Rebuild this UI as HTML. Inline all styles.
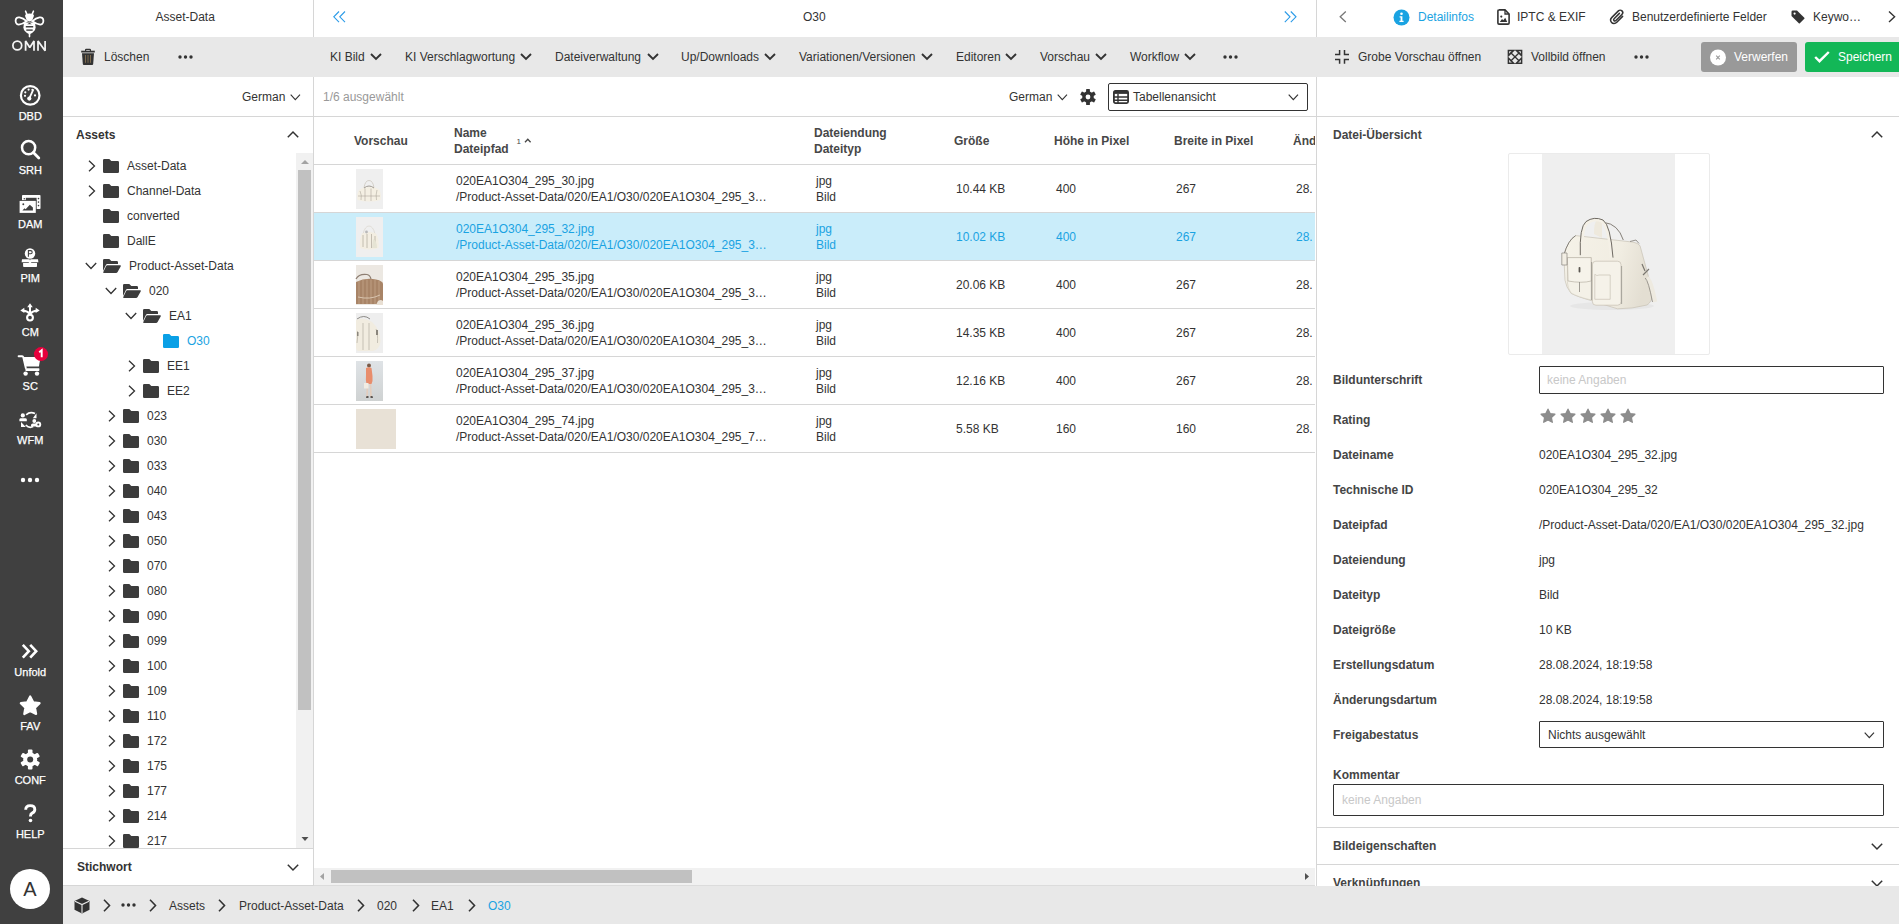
<!DOCTYPE html>
<html><head><meta charset="utf-8">
<style>
*{box-sizing:border-box;margin:0;padding:0}
html,body{width:1899px;height:924px;overflow:hidden;background:#fff;font-family:"Liberation Sans",sans-serif;font-size:12px;color:#333}
.abs{position:absolute}
.t{position:absolute;white-space:nowrap;line-height:14px}
#side{position:absolute;left:0;top:0;width:63px;height:924px;background:#404040}
.gray{background:#e8e8e8}
.b{font-weight:bold}
svg{position:absolute;overflow:visible}
.blue{color:#1aa3e2}
.sl{position:absolute;left:0;width:60.5px;text-align:center;white-space:nowrap;line-height:14px;font-size:11px;color:#fff;-webkit-text-stroke:0.25px #fff}
</style></head><body>
<div class="abs" style="left:313px;top:0;width:1px;height:886px;background:#d6d6d6"></div>
<div class="abs" style="left:1316px;top:0;width:1px;height:886px;background:#d6d6d6"></div>
<div class="abs gray" style="left:63px;top:37px;width:1836px;height:40px"></div>
<div class="abs" style="left:63px;top:116px;width:1836px;height:1px;background:#d6d6d6"></div>
<div id="side">
<svg style="left:0;top:0" width="63" height="60" viewBox="0 0 63 60">
 <path d="M25.6 11.2 L27 14.6 M33.4 11.2 L32 14.6" stroke="#fff" stroke-width="1.6" stroke-linecap="round"/>
 <path d="M25 15.8 Q25.3 13.6 29.5 13.6 Q33.7 13.6 34 15.8 L32.3 20.2 Q29.5 22.6 26.7 20.2Z" fill="#fff"/>
 <path d="M26.6 21.2 C22.5 24 16 27.2 15.6 21 C15.4 15 22.5 17.4 26.6 21.2Z" fill="none" stroke="#fff" stroke-width="1.8"/>
 <path d="M32.4 21.2 C36.5 24 43 27.2 43.4 21 C43.6 15 36.5 17.4 32.4 21.2Z" fill="none" stroke="#fff" stroke-width="1.8"/>
 <path d="M24 22.5 H35 L35.6 27.5 Q35.3 31.8 29.5 34.2 Q23.7 31.8 23.4 27.5Z" fill="#fff"/>
 <path d="M27.2 24.2 L29.5 22.8 L31.8 24.2Z" fill="#404040"/>
 <rect x="25.8" y="26" width="7.4" height="1.5" fill="#404040"/>
 <rect x="26.3" y="29.4" width="6.4" height="1.4" fill="#404040"/>
 <path d="M29.5 33.5 V36.6" stroke="#fff" stroke-width="1.6" stroke-linecap="round"/>
 <g fill="none" stroke="#f4f4f4" stroke-width="1.75" stroke-linejoin="bevel">
  <circle cx="17.3" cy="45.6" r="4.4"/>
  <path d="M25.6 50.8 V41 L29.8 47.4 L34 41 V50.8"/>
  <path d="M38 50.8 V41 L45.1 50.8 V41"/>
 </g>
</svg>
<svg style="left:0;top:80px" width="63" height="30" viewBox="0 80 63 30">
 <circle cx="30.2" cy="95.4" r="9.3" fill="none" stroke="#fff" stroke-width="2.2"/>
 <circle cx="25.3" cy="92.3" r="1.1" fill="#fff"/><circle cx="28.6" cy="89.6" r="1.1" fill="#fff"/><circle cx="35" cy="95.4" r="1.1" fill="#fff"/><circle cx="25" cy="95.8" r="1.1" fill="#fff"/><circle cx="32.4" cy="89.8" r="1.1" fill="#fff"/>
 <path d="M29.2 98.6 L33.4 89.4" stroke="#fff" stroke-width="1.8"/>
 <circle cx="29.3" cy="98.6" r="2.1" fill="#fff"/>
</svg>
<svg style="left:0;top:135px" width="63" height="30" viewBox="0 135 63 30">
 <circle cx="28.6" cy="147.6" r="6.6" fill="none" stroke="#fff" stroke-width="2.5"/>
 <path d="M33.4 152.6 L38.8 158" stroke="#fff" stroke-width="2.8" stroke-linecap="round"/>
</svg>
<svg style="left:0;top:190px" width="63" height="30" viewBox="0 190 63 30">
 <rect x="22" y="195" width="18.5" height="14" rx="0.8" fill="#fff"/>
 <rect x="25.8" y="197.8" width="10.8" height="3" fill="#404040"/>
 <circle cx="24.3" cy="198.7" r="0.8" fill="#404040"/><circle cx="38.5" cy="198.6" r="0.8" fill="#404040"/><circle cx="38.5" cy="202.1" r="0.8" fill="#404040"/><circle cx="38.5" cy="205.6" r="0.8" fill="#404040"/>
 <rect x="18.8" y="200.1" width="17.9" height="13.6" fill="#404040"/>
 <rect x="19.6" y="200.9" width="16.2" height="12" fill="#fff"/>
 <path d="M22.4 210.6 L24.5 208.2 L25.6 209.2 L29.8 204.8 L32.9 207.6 V210.6Z" fill="#404040"/>
 <circle cx="23.3" cy="204.2" r="0.95" fill="#404040"/>
</svg>
<svg style="left:0;top:244px" width="63" height="30" viewBox="0 244 63 30">
 <circle cx="30" cy="253.5" r="5.2" fill="#fff"/>
 <path d="M28.4 256.8 V250.6 H30.6 Q32.2 250.6 32.2 252.2 Q32.2 253.8 30.6 253.8 H28.4" fill="none" stroke="#404040" stroke-width="1.1"/>
 <path d="M22 259.2 H29.5 L30 260.5 L30.5 259.2 H38 L38.4 262.2 H21.6Z" fill="#fff"/>
 <path d="M23.1 262.9 H28.4 L30 261.2 L31.6 262.9 H37 V266.2 Q37 267 36.2 267 H23.9 Q23.1 267 23.1 266.2Z" fill="#fff"/>
</svg>
<svg style="left:0;top:298px" width="63" height="30" viewBox="0 298 63 30">
 <path d="M30 306 V313.5 M23 310.6 Q27.5 311 30 314 Q32.5 311 37 310.6" stroke="#fff" stroke-width="2" fill="none"/>
 <path d="M27.2 307.2 L30 303.2 L32.8 307.2Z M20.3 310.5 L24.3 307.8 L24.4 313Z M39.7 310.5 L35.7 307.8 L35.6 313Z" fill="#fff"/>
 <circle cx="30" cy="317.6" r="2.9" fill="#404040" stroke="#fff" stroke-width="2.1"/>
</svg>
<svg style="left:0;top:340px" width="63" height="40" viewBox="0 340 63 40">
 <path d="M18.6 356.3 H22.2 Q23 356.3 23.3 357.2 L25.8 368" stroke="#fff" stroke-width="1.9" fill="none" stroke-linecap="round"/>
 <path d="M23 357 H40.6 L38.9 366.6 H25.2Z" fill="#fff"/>
 <rect x="25.4" y="368.2" width="14" height="2.7" rx="0.6" fill="#fff"/>
 <circle cx="25.6" cy="373.6" r="2.2" fill="#fff"/><circle cx="37" cy="373.6" r="2.2" fill="#fff"/>
 <circle cx="41" cy="354.1" r="7" fill="#e6003c"/>
 <path d="M39.2 352.2 L41.7 350.2 V357.2" stroke="#fff" stroke-width="1.9" fill="none"/>
</svg>
<svg style="left:0;top:405px" width="63" height="30" viewBox="0 405 63 30">
 <circle cx="22.8" cy="415.4" r="2.1" fill="#fff"/>
 <path d="M19.4 421.2 V419.6 Q19.4 418.2 21 418.2 H25.2 Q26.8 418.2 26.8 419.6 V421.2Z" fill="#fff"/>
 <path d="M26.2 414.8 Q30 411.2 35 413.6" stroke="#fff" stroke-width="1.7" fill="none"/>
 <path d="M32.8 418.2 L36.5 418.2 L36.5 413.2Z" fill="#fff"/>
 <path d="M33.2 426.6 Q29 428.6 25.8 425" stroke="#fff" stroke-width="1.7" fill="none"/>
 <path d="M21 422 L21 427 L25.8 427Z" fill="#fff"/>
 <circle cx="34.3" cy="421" r="1.9" fill="#fff"/>
 <path d="M31 426.6 V425.2 Q31 423.5 32.8 423.5 H35.8 Q37 423.5 37 425 V426.6Z" fill="#fff"/>
 <circle cx="38.3" cy="424.4" r="2.9" fill="#fff"/><circle cx="38.3" cy="424.4" r="1" fill="#404040"/>
</svg>
<svg style="left:0;top:470px" width="63" height="20" viewBox="0 470 63 20">
 <circle cx="23" cy="480" r="2.2" fill="#fff"/><circle cx="30" cy="480" r="2.2" fill="#fff"/><circle cx="37" cy="480" r="2.2" fill="#fff"/>
</svg>
<svg style="left:0;top:640px" width="63" height="24" viewBox="0 640 63 24">
 <path d="M22.8 644.8 L28.8 651.2 L22.8 657.6 M30.2 644.8 L36.2 651.2 L30.2 657.6" stroke="#fff" stroke-width="2.6" fill="none"/>
</svg>
<svg style="left:0;top:692px" width="63" height="26" viewBox="0 692 63 26">
 <path d="M30.2 696.5 L33.2 702.3 L39.6 703.2 L35 707.6 L36.1 714 L30.2 711 L24.3 714 L25.4 707.6 L20.8 703.2 L27.2 702.3Z" fill="#fff" stroke="#fff" stroke-width="2.2" stroke-linejoin="round"/>
</svg>
<svg style="left:0;top:746px" width="63" height="26" viewBox="0 746 63 26">
 <g transform="translate(30.2 759.6)" fill="#fff">
  <circle r="7"/>
  <rect x="-2.3" y="-10" width="4.6" height="5" rx="1" transform="rotate(0)"/><rect x="-2.3" y="-10" width="4.6" height="5" rx="1" transform="rotate(60)"/><rect x="-2.3" y="-10" width="4.6" height="5" rx="1" transform="rotate(120)"/><rect x="-2.3" y="-10" width="4.6" height="5" rx="1" transform="rotate(180)"/><rect x="-2.3" y="-10" width="4.6" height="5" rx="1" transform="rotate(240)"/><rect x="-2.3" y="-10" width="4.6" height="5" rx="1" transform="rotate(300)"/>
  <circle r="3" fill="#404040"/>
 </g>
</svg>
<svg style="left:0;top:800px" width="63" height="30" viewBox="0 800 63 30">
 <path d="M25.7 809.8 Q25.7 805.6 30.2 805.6 Q34.8 805.6 34.8 809.4 Q34.8 811.7 32.5 812.9 Q30.5 814 30.5 816 V816.6" stroke="#fff" stroke-width="2.9" fill="none"/>
 <circle cx="30.5" cy="820.5" r="1.8" fill="#fff"/>
</svg>
<div class="sl" style="top:109px">DBD</div>
<div class="sl" style="top:163px">SRH</div>
<div class="sl" style="top:217px">DAM</div>
<div class="sl" style="top:271px">PIM</div>
<div class="sl" style="top:325px">CM</div>
<div class="sl" style="top:379px">SC</div>
<div class="sl" style="top:433px">WFM</div>
<div class="sl" style="top:665px">Unfold</div>
<div class="sl" style="top:719px">FAV</div>
<div class="sl" style="top:773px">CONF</div>
<div class="sl" style="top:827px">HELP</div>
<div class="abs" style="left:10px;top:869px;width:40px;height:40px;border-radius:50%;background:#fff;color:#333;font-size:20px;line-height:40px;text-align:center">A</div>
</div>
<!-- LEFT PANEL -->
<div class="t" style="left:155.5px;top:10px">Asset-Data</div>
<svg style="left:81px;top:49px" width="14" height="16" viewBox="0 0 14 16">
 <path d="M0.2 2.6 H13.8" stroke="#333" stroke-width="1.8"/>
 <path d="M4.6 2.2 V0.8 Q4.6 0.3 5.1 0.3 H8.9 Q9.4 0.3 9.4 0.8 V2.2" stroke="#333" stroke-width="1.2" fill="none"/>
 <path d="M1 4.2 H13 L12.2 15 Q12.1 15.9 11.2 15.9 H2.8 Q1.9 15.9 1.8 15 Z" fill="#333"/>
 <path d="M4.5 6 V13.8 M7 6 V13.8 M9.5 6 V13.8" stroke="#c9a46b" stroke-width="0.9" opacity="0.55"/>
</svg>
<div class="t" style="left:104px;top:50px">Löschen</div>
<svg style="left:178px;top:54px" width="16" height="6"><circle cx="2" cy="3" r="1.7" fill="#333"/><circle cx="7.5" cy="3" r="1.7" fill="#333"/><circle cx="13" cy="3" r="1.7" fill="#333"/></svg>
<div class="t" style="left:242px;top:90px">German</div>
<svg style="left:290px;top:94px" width="11" height="7"><path d="M0.7 0.7 L5.3 5.6 L10 0.7" stroke="#333" stroke-width="1.1" fill="none"/></svg>
<div class="t b" style="left:76px;top:128px">Assets</div>
<svg style="left:287px;top:131px" width="12" height="7"><path d="M0.8 6.2 L6 1 L11.2 6.2" stroke="#333" stroke-width="1.5" fill="none"/></svg>
<!-- left scrollbar -->
<div class="abs" style="left:296px;top:153px;width:17px;height:695px;background:#f1f1f1"></div>
<div class="abs" style="left:298px;top:170px;width:13px;height:540px;background:#c1c1c1"></div>
<svg style="left:297px;top:153px" width="16" height="16"><path d="M4 11 L8 7 L12 11Z" fill="#a3a3a3"/></svg>
<svg style="left:297px;top:832px" width="16" height="16"><path d="M4.5 5 L11.5 5 L8 9Z" fill="#505050"/></svg>
<div class="abs" style="left:63px;top:848px;width:250px;height:1px;background:#d6d6d6"></div>
<div class="t b" style="left:77px;top:860px">Stichwort</div>
<svg style="left:287px;top:864px" width="12" height="7"><path d="M0.8 0.8 L6 6 L11.2 0.8" stroke="#333" stroke-width="1.5" fill="none"/></svg>
<div class="abs" style="left:63px;top:885px;width:250px;height:1px;background:#d6d6d6"></div>
<div class="abs" style="left:63px;top:153px;width:234px;height:695px;overflow:hidden">
<svg style="left:25px;top:6.5px" width="8" height="12"><path d="M1 0.8 L6.5 6 L1 11.2" stroke="#333" stroke-width="1.3" fill="none"/></svg>
<svg style="left:40px;top:6.0px" width="16" height="14"><path d="M0 1.3 Q0 0 1.3 0 H6.3 L8.3 2 H14.7 Q16 2 16 3.3 V12.7 Q16 14 14.7 14 H1.3 Q0 14 0 12.7Z" fill="#3c3c3c"/></svg>
<div class="t" style="left:64px;top:5.5px">Asset-Data</div>
<svg style="left:25px;top:31.5px" width="8" height="12"><path d="M1 0.8 L6.5 6 L1 11.2" stroke="#333" stroke-width="1.3" fill="none"/></svg>
<svg style="left:40px;top:31.0px" width="16" height="14"><path d="M0 1.3 Q0 0 1.3 0 H6.3 L8.3 2 H14.7 Q16 2 16 3.3 V12.7 Q16 14 14.7 14 H1.3 Q0 14 0 12.7Z" fill="#3c3c3c"/></svg>
<div class="t" style="left:64px;top:30.5px">Channel-Data</div>
<svg style="left:40px;top:56.0px" width="16" height="14"><path d="M0 1.3 Q0 0 1.3 0 H6.3 L8.3 2 H14.7 Q16 2 16 3.3 V12.7 Q16 14 14.7 14 H1.3 Q0 14 0 12.7Z" fill="#3c3c3c"/></svg>
<div class="t" style="left:64px;top:55.5px">converted</div>
<svg style="left:40px;top:81.0px" width="16" height="14"><path d="M0 1.3 Q0 0 1.3 0 H6.3 L8.3 2 H14.7 Q16 2 16 3.3 V12.7 Q16 14 14.7 14 H1.3 Q0 14 0 12.7Z" fill="#3c3c3c"/></svg>
<div class="t" style="left:64px;top:80.5px">DallE</div>
<svg style="left:22px;top:109.0px" width="12" height="8"><path d="M0.8 1 L6 6.5 L11.2 1" stroke="#333" stroke-width="1.3" fill="none"/></svg>
<svg style="left:40px;top:106.0px" width="18" height="14"><path d="M0 12 V1.3 Q0 0 1.3 0 H6.3 L8.3 2 H13.7 Q15 2 15 3.3 V5 H4.3 Q3.4 5 2.9 6Z" fill="#3c3c3c"/><path d="M4.2 6.2 H17 Q18.3 6.2 17.8 7.3 L14.6 13 Q14.1 14 13 14 H0.9 Q-0.2 14 0.3 13 L3 7.2 Q3.5 6.2 4.2 6.2Z" fill="#3c3c3c"/></svg>
<div class="t" style="left:66px;top:105.5px">Product-Asset-Data</div>
<svg style="left:42px;top:134.0px" width="12" height="8"><path d="M0.8 1 L6 6.5 L11.2 1" stroke="#333" stroke-width="1.3" fill="none"/></svg>
<svg style="left:60px;top:131.0px" width="18" height="14"><path d="M0 12 V1.3 Q0 0 1.3 0 H6.3 L8.3 2 H13.7 Q15 2 15 3.3 V5 H4.3 Q3.4 5 2.9 6Z" fill="#3c3c3c"/><path d="M4.2 6.2 H17 Q18.3 6.2 17.8 7.3 L14.6 13 Q14.1 14 13 14 H0.9 Q-0.2 14 0.3 13 L3 7.2 Q3.5 6.2 4.2 6.2Z" fill="#3c3c3c"/></svg>
<div class="t" style="left:86px;top:130.5px">020</div>
<svg style="left:62px;top:159.0px" width="12" height="8"><path d="M0.8 1 L6 6.5 L11.2 1" stroke="#333" stroke-width="1.3" fill="none"/></svg>
<svg style="left:80px;top:156.0px" width="18" height="14"><path d="M0 12 V1.3 Q0 0 1.3 0 H6.3 L8.3 2 H13.7 Q15 2 15 3.3 V5 H4.3 Q3.4 5 2.9 6Z" fill="#3c3c3c"/><path d="M4.2 6.2 H17 Q18.3 6.2 17.8 7.3 L14.6 13 Q14.1 14 13 14 H0.9 Q-0.2 14 0.3 13 L3 7.2 Q3.5 6.2 4.2 6.2Z" fill="#3c3c3c"/></svg>
<div class="t" style="left:106px;top:155.5px">EA1</div>
<svg style="left:100px;top:181.0px" width="16" height="14"><path d="M0 1.3 Q0 0 1.3 0 H6.3 L8.3 2 H14.7 Q16 2 16 3.3 V12.7 Q16 14 14.7 14 H1.3 Q0 14 0 12.7Z" fill="#0aa0e6"/></svg>
<div class="t blue" style="left:124px;top:180.5px">O30</div>
<svg style="left:65px;top:206.5px" width="8" height="12"><path d="M1 0.8 L6.5 6 L1 11.2" stroke="#333" stroke-width="1.3" fill="none"/></svg>
<svg style="left:80px;top:206.0px" width="16" height="14"><path d="M0 1.3 Q0 0 1.3 0 H6.3 L8.3 2 H14.7 Q16 2 16 3.3 V12.7 Q16 14 14.7 14 H1.3 Q0 14 0 12.7Z" fill="#3c3c3c"/></svg>
<div class="t" style="left:104px;top:205.5px">EE1</div>
<svg style="left:65px;top:231.5px" width="8" height="12"><path d="M1 0.8 L6.5 6 L1 11.2" stroke="#333" stroke-width="1.3" fill="none"/></svg>
<svg style="left:80px;top:231.0px" width="16" height="14"><path d="M0 1.3 Q0 0 1.3 0 H6.3 L8.3 2 H14.7 Q16 2 16 3.3 V12.7 Q16 14 14.7 14 H1.3 Q0 14 0 12.7Z" fill="#3c3c3c"/></svg>
<div class="t" style="left:104px;top:230.5px">EE2</div>
<svg style="left:45px;top:256.5px" width="8" height="12"><path d="M1 0.8 L6.5 6 L1 11.2" stroke="#333" stroke-width="1.3" fill="none"/></svg>
<svg style="left:60px;top:256.0px" width="16" height="14"><path d="M0 1.3 Q0 0 1.3 0 H6.3 L8.3 2 H14.7 Q16 2 16 3.3 V12.7 Q16 14 14.7 14 H1.3 Q0 14 0 12.7Z" fill="#3c3c3c"/></svg>
<div class="t" style="left:84px;top:255.5px">023</div>
<svg style="left:45px;top:281.5px" width="8" height="12"><path d="M1 0.8 L6.5 6 L1 11.2" stroke="#333" stroke-width="1.3" fill="none"/></svg>
<svg style="left:60px;top:281.0px" width="16" height="14"><path d="M0 1.3 Q0 0 1.3 0 H6.3 L8.3 2 H14.7 Q16 2 16 3.3 V12.7 Q16 14 14.7 14 H1.3 Q0 14 0 12.7Z" fill="#3c3c3c"/></svg>
<div class="t" style="left:84px;top:280.5px">030</div>
<svg style="left:45px;top:306.5px" width="8" height="12"><path d="M1 0.8 L6.5 6 L1 11.2" stroke="#333" stroke-width="1.3" fill="none"/></svg>
<svg style="left:60px;top:306.0px" width="16" height="14"><path d="M0 1.3 Q0 0 1.3 0 H6.3 L8.3 2 H14.7 Q16 2 16 3.3 V12.7 Q16 14 14.7 14 H1.3 Q0 14 0 12.7Z" fill="#3c3c3c"/></svg>
<div class="t" style="left:84px;top:305.5px">033</div>
<svg style="left:45px;top:331.5px" width="8" height="12"><path d="M1 0.8 L6.5 6 L1 11.2" stroke="#333" stroke-width="1.3" fill="none"/></svg>
<svg style="left:60px;top:331.0px" width="16" height="14"><path d="M0 1.3 Q0 0 1.3 0 H6.3 L8.3 2 H14.7 Q16 2 16 3.3 V12.7 Q16 14 14.7 14 H1.3 Q0 14 0 12.7Z" fill="#3c3c3c"/></svg>
<div class="t" style="left:84px;top:330.5px">040</div>
<svg style="left:45px;top:356.5px" width="8" height="12"><path d="M1 0.8 L6.5 6 L1 11.2" stroke="#333" stroke-width="1.3" fill="none"/></svg>
<svg style="left:60px;top:356.0px" width="16" height="14"><path d="M0 1.3 Q0 0 1.3 0 H6.3 L8.3 2 H14.7 Q16 2 16 3.3 V12.7 Q16 14 14.7 14 H1.3 Q0 14 0 12.7Z" fill="#3c3c3c"/></svg>
<div class="t" style="left:84px;top:355.5px">043</div>
<svg style="left:45px;top:381.5px" width="8" height="12"><path d="M1 0.8 L6.5 6 L1 11.2" stroke="#333" stroke-width="1.3" fill="none"/></svg>
<svg style="left:60px;top:381.0px" width="16" height="14"><path d="M0 1.3 Q0 0 1.3 0 H6.3 L8.3 2 H14.7 Q16 2 16 3.3 V12.7 Q16 14 14.7 14 H1.3 Q0 14 0 12.7Z" fill="#3c3c3c"/></svg>
<div class="t" style="left:84px;top:380.5px">050</div>
<svg style="left:45px;top:406.5px" width="8" height="12"><path d="M1 0.8 L6.5 6 L1 11.2" stroke="#333" stroke-width="1.3" fill="none"/></svg>
<svg style="left:60px;top:406.0px" width="16" height="14"><path d="M0 1.3 Q0 0 1.3 0 H6.3 L8.3 2 H14.7 Q16 2 16 3.3 V12.7 Q16 14 14.7 14 H1.3 Q0 14 0 12.7Z" fill="#3c3c3c"/></svg>
<div class="t" style="left:84px;top:405.5px">070</div>
<svg style="left:45px;top:431.5px" width="8" height="12"><path d="M1 0.8 L6.5 6 L1 11.2" stroke="#333" stroke-width="1.3" fill="none"/></svg>
<svg style="left:60px;top:431.0px" width="16" height="14"><path d="M0 1.3 Q0 0 1.3 0 H6.3 L8.3 2 H14.7 Q16 2 16 3.3 V12.7 Q16 14 14.7 14 H1.3 Q0 14 0 12.7Z" fill="#3c3c3c"/></svg>
<div class="t" style="left:84px;top:430.5px">080</div>
<svg style="left:45px;top:456.5px" width="8" height="12"><path d="M1 0.8 L6.5 6 L1 11.2" stroke="#333" stroke-width="1.3" fill="none"/></svg>
<svg style="left:60px;top:456.0px" width="16" height="14"><path d="M0 1.3 Q0 0 1.3 0 H6.3 L8.3 2 H14.7 Q16 2 16 3.3 V12.7 Q16 14 14.7 14 H1.3 Q0 14 0 12.7Z" fill="#3c3c3c"/></svg>
<div class="t" style="left:84px;top:455.5px">090</div>
<svg style="left:45px;top:481.5px" width="8" height="12"><path d="M1 0.8 L6.5 6 L1 11.2" stroke="#333" stroke-width="1.3" fill="none"/></svg>
<svg style="left:60px;top:481.0px" width="16" height="14"><path d="M0 1.3 Q0 0 1.3 0 H6.3 L8.3 2 H14.7 Q16 2 16 3.3 V12.7 Q16 14 14.7 14 H1.3 Q0 14 0 12.7Z" fill="#3c3c3c"/></svg>
<div class="t" style="left:84px;top:480.5px">099</div>
<svg style="left:45px;top:506.5px" width="8" height="12"><path d="M1 0.8 L6.5 6 L1 11.2" stroke="#333" stroke-width="1.3" fill="none"/></svg>
<svg style="left:60px;top:506.0px" width="16" height="14"><path d="M0 1.3 Q0 0 1.3 0 H6.3 L8.3 2 H14.7 Q16 2 16 3.3 V12.7 Q16 14 14.7 14 H1.3 Q0 14 0 12.7Z" fill="#3c3c3c"/></svg>
<div class="t" style="left:84px;top:505.5px">100</div>
<svg style="left:45px;top:531.5px" width="8" height="12"><path d="M1 0.8 L6.5 6 L1 11.2" stroke="#333" stroke-width="1.3" fill="none"/></svg>
<svg style="left:60px;top:531.0px" width="16" height="14"><path d="M0 1.3 Q0 0 1.3 0 H6.3 L8.3 2 H14.7 Q16 2 16 3.3 V12.7 Q16 14 14.7 14 H1.3 Q0 14 0 12.7Z" fill="#3c3c3c"/></svg>
<div class="t" style="left:84px;top:530.5px">109</div>
<svg style="left:45px;top:556.5px" width="8" height="12"><path d="M1 0.8 L6.5 6 L1 11.2" stroke="#333" stroke-width="1.3" fill="none"/></svg>
<svg style="left:60px;top:556.0px" width="16" height="14"><path d="M0 1.3 Q0 0 1.3 0 H6.3 L8.3 2 H14.7 Q16 2 16 3.3 V12.7 Q16 14 14.7 14 H1.3 Q0 14 0 12.7Z" fill="#3c3c3c"/></svg>
<div class="t" style="left:84px;top:555.5px">110</div>
<svg style="left:45px;top:581.5px" width="8" height="12"><path d="M1 0.8 L6.5 6 L1 11.2" stroke="#333" stroke-width="1.3" fill="none"/></svg>
<svg style="left:60px;top:581.0px" width="16" height="14"><path d="M0 1.3 Q0 0 1.3 0 H6.3 L8.3 2 H14.7 Q16 2 16 3.3 V12.7 Q16 14 14.7 14 H1.3 Q0 14 0 12.7Z" fill="#3c3c3c"/></svg>
<div class="t" style="left:84px;top:580.5px">172</div>
<svg style="left:45px;top:606.5px" width="8" height="12"><path d="M1 0.8 L6.5 6 L1 11.2" stroke="#333" stroke-width="1.3" fill="none"/></svg>
<svg style="left:60px;top:606.0px" width="16" height="14"><path d="M0 1.3 Q0 0 1.3 0 H6.3 L8.3 2 H14.7 Q16 2 16 3.3 V12.7 Q16 14 14.7 14 H1.3 Q0 14 0 12.7Z" fill="#3c3c3c"/></svg>
<div class="t" style="left:84px;top:605.5px">175</div>
<svg style="left:45px;top:631.5px" width="8" height="12"><path d="M1 0.8 L6.5 6 L1 11.2" stroke="#333" stroke-width="1.3" fill="none"/></svg>
<svg style="left:60px;top:631.0px" width="16" height="14"><path d="M0 1.3 Q0 0 1.3 0 H6.3 L8.3 2 H14.7 Q16 2 16 3.3 V12.7 Q16 14 14.7 14 H1.3 Q0 14 0 12.7Z" fill="#3c3c3c"/></svg>
<div class="t" style="left:84px;top:630.5px">177</div>
<svg style="left:45px;top:656.5px" width="8" height="12"><path d="M1 0.8 L6.5 6 L1 11.2" stroke="#333" stroke-width="1.3" fill="none"/></svg>
<svg style="left:60px;top:656.0px" width="16" height="14"><path d="M0 1.3 Q0 0 1.3 0 H6.3 L8.3 2 H14.7 Q16 2 16 3.3 V12.7 Q16 14 14.7 14 H1.3 Q0 14 0 12.7Z" fill="#3c3c3c"/></svg>
<div class="t" style="left:84px;top:655.5px">214</div>
<svg style="left:45px;top:681.5px" width="8" height="12"><path d="M1 0.8 L6.5 6 L1 11.2" stroke="#333" stroke-width="1.3" fill="none"/></svg>
<svg style="left:60px;top:681.0px" width="16" height="14"><path d="M0 1.3 Q0 0 1.3 0 H6.3 L8.3 2 H14.7 Q16 2 16 3.3 V12.7 Q16 14 14.7 14 H1.3 Q0 14 0 12.7Z" fill="#3c3c3c"/></svg>
<div class="t" style="left:84px;top:680.5px">217</div>
</div>
<svg style="left:333px;top:11px" width="14" height="12"><path d="M6 0.5 L0.8 5.8 L6 11.1 M12 0.5 L6.8 5.8 L12 11.1" stroke="#2a9be8" stroke-width="1.1" fill="none"/></svg>
<div class="t" style="left:803px;top:10px">O30</div>
<svg style="left:1284px;top:11px" width="14" height="12"><path d="M0.8 0.5 L6 5.8 L0.8 11.1 M6.8 0.5 L12 5.8 L6.8 11.1" stroke="#2a9be8" stroke-width="1.1" fill="none"/></svg>
<div class="t" style="left:330px;top:50px">KI Bild</div>
<svg style="left:370px;top:53px" width="12" height="7"><path d="M1 1 L6 6 L11 1" stroke="#333" stroke-width="1.9" fill="none"/></svg>
<div class="t" style="left:405px;top:50px">KI Verschlagwortung</div>
<svg style="left:519.7px;top:53px" width="12" height="7"><path d="M1 1 L6 6 L11 1" stroke="#333" stroke-width="1.9" fill="none"/></svg>
<div class="t" style="left:555px;top:50px">Dateiverwaltung</div>
<svg style="left:646.5px;top:53px" width="12" height="7"><path d="M1 1 L6 6 L11 1" stroke="#333" stroke-width="1.9" fill="none"/></svg>
<div class="t" style="left:681px;top:50px">Up/Downloads</div>
<svg style="left:764.4px;top:53px" width="12" height="7"><path d="M1 1 L6 6 L11 1" stroke="#333" stroke-width="1.9" fill="none"/></svg>
<div class="t" style="left:799px;top:50px">Variationen/Versionen</div>
<svg style="left:920.7px;top:53px" width="12" height="7"><path d="M1 1 L6 6 L11 1" stroke="#333" stroke-width="1.9" fill="none"/></svg>
<div class="t" style="left:956px;top:50px">Editoren</div>
<svg style="left:1005.4px;top:53px" width="12" height="7"><path d="M1 1 L6 6 L11 1" stroke="#333" stroke-width="1.9" fill="none"/></svg>
<div class="t" style="left:1040px;top:50px">Vorschau</div>
<svg style="left:1095.4px;top:53px" width="12" height="7"><path d="M1 1 L6 6 L11 1" stroke="#333" stroke-width="1.9" fill="none"/></svg>
<div class="t" style="left:1130px;top:50px">Workflow</div>
<svg style="left:1184.4px;top:53px" width="12" height="7"><path d="M1 1 L6 6 L11 1" stroke="#333" stroke-width="1.9" fill="none"/></svg>
<svg style="left:1223px;top:54px" width="16" height="6"><circle cx="2" cy="3" r="1.7" fill="#333"/><circle cx="7.5" cy="3" r="1.7" fill="#333"/><circle cx="13" cy="3" r="1.7" fill="#333"/></svg>
<div class="t" style="left:323px;top:90px;color:#999">1/6 ausgewählt</div>
<div class="t" style="left:1009px;top:90px">German</div>
<svg style="left:1057px;top:94px" width="11" height="7"><path d="M0.7 0.7 L5.3 5.6 L10 0.7" stroke="#333" stroke-width="1.1" fill="none"/></svg>
<svg style="left:1080px;top:89px" width="16" height="16" viewBox="-8 -8 16 16"><g fill="#333"><circle r="5.8"/><rect x="-1.9" y="-8" width="3.8" height="4" rx="0.6" transform="rotate(0)"/><rect x="-1.9" y="-8" width="3.8" height="4" rx="0.6" transform="rotate(60)"/><rect x="-1.9" y="-8" width="3.8" height="4" rx="0.6" transform="rotate(120)"/><rect x="-1.9" y="-8" width="3.8" height="4" rx="0.6" transform="rotate(180)"/><rect x="-1.9" y="-8" width="3.8" height="4" rx="0.6" transform="rotate(240)"/><rect x="-1.9" y="-8" width="3.8" height="4" rx="0.6" transform="rotate(300)"/></g><circle r="2.4" fill="#fff"/></svg>
<div class="abs" style="left:1108px;top:83px;width:200px;height:28px;border:1px solid #333;border-radius:2px"></div>
<svg style="left:1113px;top:90px" width="16" height="14"><rect x="0.9" y="0.9" width="14.2" height="12.2" rx="1.5" fill="none" stroke="#333" stroke-width="1.8"/><rect x="0.9" y="0.9" width="14.2" height="3" fill="#333"/><path d="M1 7 H15 M1 10.2 H15 M5 4 V13" stroke="#333" stroke-width="1.4"/></svg>
<div class="t" style="left:1133px;top:90px">Tabellenansicht</div>
<svg style="left:1287.5px;top:94px" width="11" height="7"><path d="M0.7 0.7 L5.3 5.6 L10 0.7" stroke="#333" stroke-width="1.2" fill="none"/></svg>
<div class="t b" style="left:354px;top:134px;color:#474747">Vorschau</div>
<div class="b abs" style="left:454px;top:125px;line-height:16px;color:#474747;white-space:nowrap">Name<br>Dateipfad</div>
<div class="t" style="left:516.5px;top:136.5px;font-size:8px;line-height:10px;color:#474747">1</div>
<svg style="left:524px;top:138px" width="8" height="5"><path d="M1 4.3 L3.8 1.2 L6.6 4.3" stroke="#474747" stroke-width="1.3" fill="none"/></svg>
<div class="b abs" style="left:814px;top:125px;line-height:16px;color:#474747;white-space:nowrap">Dateiendung<br>Dateityp</div>
<div class="t b" style="left:954px;top:134px;color:#474747">Größe</div>
<div class="t b" style="left:1054px;top:134px;color:#474747">Höhe in Pixel</div>
<div class="t b" style="left:1174px;top:134px;color:#474747">Breite in Pixel</div>
<div class="abs" style="left:1293px;top:134px;width:22px;height:16px;overflow:hidden"><div class="t b" style="left:0;top:0;color:#474747">Änderungsdatum</div></div>
<div class="abs" style="left:314px;top:164px;width:1002px;height:1px;background:#d6d6d6"></div>
<div class="abs" style="left:314px;top:212px;width:1001px;height:1px;background:#d6d6d6"></div>
<svg style="left:356px;top:169px" width="27" height="40" viewBox="0 0 27 40"><rect width="27" height="40" fill="#efefef"/><path d="M8 19 Q9 11.5 13 11.5 Q17 11.5 18 19" fill="none" stroke="#d0ccc4" stroke-width="0.9"/><path d="M1.5 31 Q0.5 25 3 21 Q7 18 13.5 18 Q20 18 23.5 21 Q25.5 25 24.5 31 Q13 34 1.5 31Z" fill="#f4efe3"/><path d="M4 22 Q6 26 5 31 M9 19.5 V32 M15 19.5 V32 M21 21 Q19.5 26 20.5 31 M2 27 H24" stroke="#a9a397" stroke-width="0.7" fill="none" opacity="0.8"/><path d="M8 19 Q13 15 18 19" fill="none" stroke="#8d877c" stroke-width="0.8"/></svg>
<div class="abs" style="left:456px;top:173px;line-height:16px;color:#333;white-space:nowrap">020EA1O304_295_30.jpg<br>/Product-Asset-Data/020/EA1/O30/020EA1O304_295_3…</div>
<div class="abs" style="left:816px;top:173px;line-height:16px;color:#333;white-space:nowrap">jpg<br>Bild</div>
<div class="t" style="left:956px;top:182px;color:#333">10.44 KB</div>
<div class="t" style="left:1056px;top:182px;color:#333">400</div>
<div class="t" style="left:1176px;top:182px;color:#333">267</div>
<div class="t" style="left:1296px;top:182px;color:#333">28.</div>
<div class="abs" style="left:314px;top:213px;width:1001px;height:47px;background:#caedfa"></div>
<div class="abs" style="left:314px;top:260px;width:1001px;height:1px;background:#d6d6d6"></div>
<svg style="left:356px;top:217px" width="27" height="40" viewBox="0 0 27 40"><rect width="27" height="40" fill="#efefef"/><path d="M7 17 Q9 9 13 9 Q17 9 19 17" fill="none" stroke="#dcd8d0" stroke-width="0.8"/><path d="M4 31 Q3 22 6 16.5 Q13 13.5 20 16.5 Q23.5 22 22.5 31 Q13 34 4 31Z" fill="#f3eee2"/><path d="M7 18 V30 M11 17 V31 M15.5 17 V31 M19 19 V30" stroke="#9d978c" stroke-width="0.8" opacity="0.7"/><circle cx="10.5" cy="15" r="1.4" fill="#b8b8b8"/><path d="M17 22 Q21 24 21 31 H16Z" fill="#e6e4d4"/></svg>
<div class="abs" style="left:456px;top:221px;line-height:16px;color:#1aa3e2;white-space:nowrap">020EA1O304_295_32.jpg<br>/Product-Asset-Data/020/EA1/O30/020EA1O304_295_3…</div>
<div class="abs" style="left:816px;top:221px;line-height:16px;color:#1aa3e2;white-space:nowrap">jpg<br>Bild</div>
<div class="t" style="left:956px;top:230px;color:#1aa3e2">10.02 KB</div>
<div class="t" style="left:1056px;top:230px;color:#1aa3e2">400</div>
<div class="t" style="left:1176px;top:230px;color:#1aa3e2">267</div>
<div class="t" style="left:1296px;top:230px;color:#1aa3e2">28.</div>
<div class="abs" style="left:314px;top:308px;width:1001px;height:1px;background:#d6d6d6"></div>
<svg style="left:356px;top:265px" width="27" height="40" viewBox="0 0 27 40"><rect width="27" height="40" fill="#ece8e2"/><path d="M0 14 Q3 8.5 11 9.5 Q14 10 15 14" fill="none" stroke="#8e7f73" stroke-width="1.2"/><path d="M0 17 Q10 12 20 14.5 Q27 16 27 19 V38 Q25 40 22 39 H0Z" fill="#a88467"/><path d="M3 16 V39 M7 15 V39 M11 14.5 V39 M15 14.5 V39 M19 15 V39 M23 16 V38" stroke="#c4a68c" stroke-width="0.8"/><path d="M2 32 Q14 35 24 30" fill="none" stroke="#d9c5b0" stroke-width="1"/><path d="M22 36 Q25 34 27 36 V40 H20Z" fill="#e8dfd3"/></svg>
<div class="abs" style="left:456px;top:269px;line-height:16px;color:#333;white-space:nowrap">020EA1O304_295_35.jpg<br>/Product-Asset-Data/020/EA1/O30/020EA1O304_295_3…</div>
<div class="abs" style="left:816px;top:269px;line-height:16px;color:#333;white-space:nowrap">jpg<br>Bild</div>
<div class="t" style="left:956px;top:278px;color:#333">20.06 KB</div>
<div class="t" style="left:1056px;top:278px;color:#333">400</div>
<div class="t" style="left:1176px;top:278px;color:#333">267</div>
<div class="t" style="left:1296px;top:278px;color:#333">28.</div>
<div class="abs" style="left:314px;top:356px;width:1001px;height:1px;background:#d6d6d6"></div>
<svg style="left:356px;top:313px" width="27" height="40" viewBox="0 0 27 40"><rect width="27" height="40" fill="#eeeeee"/><path d="M1 6 Q8 1 14 6" fill="none" stroke="#8c8a86" stroke-width="1"/><path d="M0 7 Q8 3.5 16 9 Q24 16 24.5 28 Q24 36 17 38 H2 Q0 37 0 35Z" fill="#f1ece0"/><path d="M1.5 18 Q2 24 1 30 M7 10 V37 M13 10 V37 M20 16 Q22 20 21.5 30" stroke="#aaa498" stroke-width="0.8" fill="none" opacity="0.75"/><rect x="20" y="17" width="2" height="5" fill="#8a857c"/><rect x="1" y="19" width="1.5" height="4" fill="#8a857c"/></svg>
<div class="abs" style="left:456px;top:317px;line-height:16px;color:#333;white-space:nowrap">020EA1O304_295_36.jpg<br>/Product-Asset-Data/020/EA1/O30/020EA1O304_295_3…</div>
<div class="abs" style="left:816px;top:317px;line-height:16px;color:#333;white-space:nowrap">jpg<br>Bild</div>
<div class="t" style="left:956px;top:326px;color:#333">14.35 KB</div>
<div class="t" style="left:1056px;top:326px;color:#333">400</div>
<div class="t" style="left:1176px;top:326px;color:#333">267</div>
<div class="t" style="left:1296px;top:326px;color:#333">28.</div>
<div class="abs" style="left:314px;top:404px;width:1001px;height:1px;background:#d6d6d6"></div>
<svg style="left:356px;top:361px" width="27" height="40" viewBox="0 0 27 40"><defs><linearGradient id="pg" x1="0" y1="0" x2="0" y2="1"><stop offset="0" stop-color="#dfe3e6"/><stop offset="1" stop-color="#cfd2d2"/></linearGradient></defs><rect width="27" height="40" fill="url(#pg)"/><circle cx="13" cy="4.5" r="2" fill="#7a5a48"/><path d="M10 7 Q13 5.5 15.5 7 L16.5 15 Q17 20 15.5 23 H10.5 Q9.5 19 10 14Z" fill="#e88d6c"/><path d="M11.5 23 L11 36 M14.5 23 L15 36" stroke="#e4cdbd" stroke-width="1.6"/><path d="M10.5 35 H12.5 V37 H10Z M14.5 35 H16.5 L17 37 H14.5Z" fill="#5a5450"/><path d="M8 22 H12.5 V27.5 H8Z" fill="#f1ece3"/></svg>
<div class="abs" style="left:456px;top:365px;line-height:16px;color:#333;white-space:nowrap">020EA1O304_295_37.jpg<br>/Product-Asset-Data/020/EA1/O30/020EA1O304_295_3…</div>
<div class="abs" style="left:816px;top:365px;line-height:16px;color:#333;white-space:nowrap">jpg<br>Bild</div>
<div class="t" style="left:956px;top:374px;color:#333">12.16 KB</div>
<div class="t" style="left:1056px;top:374px;color:#333">400</div>
<div class="t" style="left:1176px;top:374px;color:#333">267</div>
<div class="t" style="left:1296px;top:374px;color:#333">28.</div>
<div class="abs" style="left:314px;top:452px;width:1001px;height:1px;background:#d6d6d6"></div>
<div class="abs" style="left:356px;top:409px;width:40px;height:40px;background:#e8e1d6"></div>
<div class="abs" style="left:456px;top:413px;line-height:16px;color:#333;white-space:nowrap">020EA1O304_295_74.jpg<br>/Product-Asset-Data/020/EA1/O30/020EA1O304_295_7…</div>
<div class="abs" style="left:816px;top:413px;line-height:16px;color:#333;white-space:nowrap">jpg<br>Bild</div>
<div class="t" style="left:956px;top:422px;color:#333">5.58 KB</div>
<div class="t" style="left:1056px;top:422px;color:#333">160</div>
<div class="t" style="left:1176px;top:422px;color:#333">160</div>
<div class="t" style="left:1296px;top:422px;color:#333">28.</div>
<div class="abs" style="left:314px;top:868px;width:1001px;height:17px;background:#f1f1f1"></div>
<div class="abs" style="left:314px;top:885px;width:1001px;height:1px;background:#dcdcdc"></div>
<div class="abs" style="left:331px;top:870px;width:361px;height:13px;background:#c1c1c1"></div>
<svg style="left:314px;top:868px" width="16" height="17"><path d="M10 5 L10 12 L6 8.5Z" fill="#a3a3a3"/></svg>
<svg style="left:1299px;top:868px" width="16" height="17"><path d="M6 5 L6 12 L10 8.5Z" fill="#505050"/></svg>
<svg style="left:1339px;top:11px" width="8" height="12"><path d="M6.8 0.6 L1.2 5.8 L6.8 11" stroke="#777" stroke-width="1.3" fill="none"/></svg>
<svg style="left:1393px;top:9px" width="17" height="17" viewBox="0 0 17 17"><circle cx="8.5" cy="8.5" r="8" fill="#1aa3e2"/><circle cx="8.5" cy="4.8" r="1.3" fill="#fff"/><path d="M6.6 7.3 H9.4 V11.8 H10.6 V13 H6.4 V11.8 H7.6 V8.5 H6.6Z" fill="#fff"/></svg>
<div class="t blue" style="left:1418px;top:10px">Detailinfos</div>
<svg style="left:1497px;top:9px" width="13" height="16" viewBox="0 0 13 16"><path d="M1.8 0.9 H8 L12.1 5 V14 Q12.1 15.1 11 15.1 H2 Q0.9 15.1 0.9 14 V2 Q0.9 0.9 2 0.9Z" fill="none" stroke="#333" stroke-width="1.6"/><path d="M8 1 V5 H12" fill="none" stroke="#333" stroke-width="1.3"/><circle cx="4.3" cy="7.6" r="1.1" fill="#333"/><path d="M2.8 13 L5 10 L6.3 11.3 L8.2 8.8 L10.2 13Z" fill="#333"/></svg>
<div class="t" style="left:1517px;top:10px">IPTC &amp; EXIF</div>
<svg style="left:1610px;top:9px" width="15" height="16" viewBox="0 0 15 16"><path d="M12.6 7.4 L6.8 13.2 C5.2 14.8 2.8 14.8 1.6 13.4 C0.3 12 0.4 9.9 1.9 8.4 L8.4 1.9 C9.4 0.9 11 0.9 12 1.9 C13 2.9 12.9 4.5 11.9 5.5 L5.9 11.5 C5.3 12.1 4.5 12.1 4 11.6 C3.5 11.1 3.5 10.3 4.1 9.7 L9.4 4.4" fill="none" stroke="#333" stroke-width="1.5" stroke-linecap="round"/></svg>
<div class="t" style="left:1632px;top:10px">Benutzerdefinierte Felder</div>
<svg style="left:1791px;top:10px" width="14" height="14" viewBox="0 0 14 14"><path d="M0.5 1.8 Q0.5 0.5 1.8 0.5 H6 L13.3 7.8 Q13.8 8.3 13.3 8.8 L8.8 13.3 Q8.3 13.8 7.8 13.3 L0.5 6Z" fill="#333"/><circle cx="3.6" cy="3.6" r="1.1" fill="#fff"/></svg>
<div class="t" style="left:1813px;top:10px">Keywo…</div>
<svg style="left:1888px;top:11px" width="8" height="12"><path d="M1 0.6 L6.6 5.8 L1 11" stroke="#333" stroke-width="1.4" fill="none"/></svg>
<svg style="left:1334px;top:49px" width="16" height="16" viewBox="0 0 16 16"><path d="M1 5.4 H5.6 V0.9 M10.5 0.9 V5.4 H15 M1 10.5 H5.6 V14.7 M10.5 14.7 V10.5 H15" fill="none" stroke="#333" stroke-width="1.5"/></svg>
<div class="t" style="left:1358px;top:50px">Grobe Vorschau öffnen</div>
<svg style="left:1507px;top:49px" width="16" height="16" viewBox="0 0 16 16"><path d="M1.4 1.4 H6.6 L1.4 6.6Z M14.6 1.4 H9.4 L14.6 6.6Z M1.4 14.2 H6.6 L1.4 9Z M14.6 14.2 H9.4 L14.6 9Z" fill="none" stroke="#333" stroke-width="1.5" stroke-linejoin="miter"/><path d="M3.5 3.5 L12.5 12.2 M12.5 3.5 L3.5 12.2" stroke="#333" stroke-width="1.3"/></svg>
<div class="t" style="left:1531px;top:50px">Vollbild öffnen</div>
<svg style="left:1634px;top:54px" width="16" height="6"><circle cx="2" cy="3" r="1.7" fill="#333"/><circle cx="7.5" cy="3" r="1.7" fill="#333"/><circle cx="13" cy="3" r="1.7" fill="#333"/></svg>
<div class="abs" style="left:1701px;top:42px;width:96px;height:30px;background:#999;border-radius:3px"></div>
<svg style="left:1709px;top:49px" width="18" height="18"><circle cx="9" cy="8.5" r="8" fill="#fff"/><path d="M7.2 6.7 L10.8 10.3 M10.8 6.7 L7.2 10.3" stroke="#999" stroke-width="1.1"/></svg>
<div class="t" style="left:1734px;top:50px;color:#fff">Verwerfen</div>
<div class="abs" style="left:1805px;top:42px;width:94px;height:30px;background:#13b757;border-radius:3px 0 0 3px"></div>
<svg style="left:1814px;top:51px" width="16" height="12"><path d="M1.2 6 L5.5 10.2 L14.8 1" stroke="#fff" stroke-width="2.4" fill="none"/></svg>
<div class="t" style="left:1838px;top:50px;color:#fff">Speichern</div>
<div class="t b" style="left:1333px;top:128px;color:#454545">Datei-Übersicht</div>
<svg style="left:1871px;top:131px" width="12" height="7"><path d="M0.8 6.2 L6 1 L11.2 6.2" stroke="#333" stroke-width="1.5" fill="none"/></svg>
<div class="abs" style="left:1508px;top:153px;width:202px;height:202px;border:1px solid #ebebeb;border-radius:2px"></div>
<svg style="left:1542px;top:154px" width="133" height="200" viewBox="0 0 133 200">
<defs><linearGradient id="bg1" x1="0" y1="0" x2="1" y2="0.2"><stop offset="0" stop-color="#f5f2e8"/><stop offset="0.65" stop-color="#f1ede2"/><stop offset="1" stop-color="#e3ded2"/></linearGradient></defs>
<rect width="133" height="200" fill="#efefef"/>
<ellipse cx="70" cy="152" rx="42" ry="4" fill="#e6e6e6"/>
<path d="M52 80 Q52 68 55 66 Q59 65 60 70 V84Z" fill="#eee9dd"/>
<path d="M62.3 68.5 Q76 70 81.3 86" fill="none" stroke="#77726a" stroke-width="0.9"/>
<path d="M33.7 81.6 L90.9 88.1 Q96 89 98 91.7 L111.1 139.3 Q110 148 105 151 Q90 155 75.4 154.8 L49.2 146.5 Q36 143 29 139.3 Q24 133 23 126.2 L21.8 101.2 Q26 86 33.7 81.6Z" fill="url(#bg1)" stroke="#c7c1b4" stroke-width="0.7"/>
<path d="M33.7 81.6 Q26 86 21.8 101.2" fill="none" stroke="#6f6b64" stroke-width="0.8"/>
<path d="M40 101.2 Q39 74 45 69 Q52 63.5 60 67 Q67 72 69.4 103.6" fill="none" stroke="#f4f0e6" stroke-width="3.4"/>
<path d="M38.3 101.2 Q37.3 73 44 67.6 Q52 62 61 66 Q68.5 71 71 103.6" fill="none" stroke="#5f5a53" stroke-width="0.9"/>
<path d="M25.4 103.6 H49.2 V146 Q36 143 29 139 Q25.4 134 25.4 128Z" fill="#f4f1e7" stroke="#cfc9bc" stroke-width="0.6"/>
<path d="M25.4 103.6 H49.2 V127 Q40 129.5 26 127Z" fill="#f6f3ea" stroke="#b7b1a5" stroke-width="0.7"/>
<rect x="36.6" y="113" width="1.8" height="5.5" rx="0.8" fill="#5b5751"/>
<path d="M37.5 128 V138" stroke="#8a867f" stroke-width="0.8"/>
<rect x="50.4" y="107.2" width="28.6" height="44" rx="3.5" fill="#f5f2e9" stroke="#c5bfb2" stroke-width="0.7"/>
<path d="M52.8 120.3 Q55 122.5 57 121 H68.2 V145.3 H52.8Z" fill="none" stroke="#c9c3b6" stroke-width="0.7"/>
<path d="M49.6 108 V146 M79.6 112 V150" stroke="#8d8982" stroke-width="0.7"/>
<path d="M100 110 L103 117 M101 121 L107 115" stroke="#7a766f" stroke-width="1.2"/>
<path d="M105 124 Q109 127 113 148" fill="none" stroke="#eeeae0" stroke-width="4.5"/>
<path d="M103.2 124 Q106.5 127 110.5 148" fill="none" stroke="#7a766f" stroke-width="0.7"/>
<path d="M19.8 99 H25 V111 H19.8Z" fill="#f2eee4" stroke="#8a857e" stroke-width="0.7"/>
<path d="M88 87.5 L94 86 L97 89.5" fill="none" stroke="#8d8982" stroke-width="0.9"/>
</svg>
<div class="t b" style="left:1333px;top:373px;color:#454545">Bildunterschrift</div>
<div class="abs" style="left:1539px;top:366px;width:345px;height:28px;border:1px solid #333;border-radius:1px"></div>
<div class="t" style="left:1547px;top:373px;color:#c8c8c8">keine Angaben</div>
<div class="t b" style="left:1333px;top:413px;color:#454545">Rating</div>
<svg style="left:1540px;top:408px" width="100" height="17"><path transform="translate(0 0)" d="M8 1.2 L10.1 5.6 L14.9 6.2 L11.4 9.5 L12.3 14.3 L8 12 L3.7 14.3 L4.6 9.5 L1.1 6.2 L5.9 5.6Z" fill="#8c8c8c" stroke="#8c8c8c" stroke-width="1.3" stroke-linejoin="round"/><path transform="translate(20 0)" d="M8 1.2 L10.1 5.6 L14.9 6.2 L11.4 9.5 L12.3 14.3 L8 12 L3.7 14.3 L4.6 9.5 L1.1 6.2 L5.9 5.6Z" fill="#8c8c8c" stroke="#8c8c8c" stroke-width="1.3" stroke-linejoin="round"/><path transform="translate(40 0)" d="M8 1.2 L10.1 5.6 L14.9 6.2 L11.4 9.5 L12.3 14.3 L8 12 L3.7 14.3 L4.6 9.5 L1.1 6.2 L5.9 5.6Z" fill="#8c8c8c" stroke="#8c8c8c" stroke-width="1.3" stroke-linejoin="round"/><path transform="translate(60 0)" d="M8 1.2 L10.1 5.6 L14.9 6.2 L11.4 9.5 L12.3 14.3 L8 12 L3.7 14.3 L4.6 9.5 L1.1 6.2 L5.9 5.6Z" fill="#8c8c8c" stroke="#8c8c8c" stroke-width="1.3" stroke-linejoin="round"/><path transform="translate(80 0)" d="M8 1.2 L10.1 5.6 L14.9 6.2 L11.4 9.5 L12.3 14.3 L8 12 L3.7 14.3 L4.6 9.5 L1.1 6.2 L5.9 5.6Z" fill="#8c8c8c" stroke="#8c8c8c" stroke-width="1.3" stroke-linejoin="round"/></svg>
<div class="t b" style="left:1333px;top:448px;color:#454545">Dateiname</div>
<div class="t" style="left:1539px;top:448px">020EA1O304_295_32.jpg</div>
<div class="t b" style="left:1333px;top:483px;color:#454545">Technische ID</div>
<div class="t" style="left:1539px;top:483px">020EA1O304_295_32</div>
<div class="t b" style="left:1333px;top:518px;color:#454545">Dateipfad</div>
<div class="t" style="left:1539px;top:518px">/Product-Asset-Data/020/EA1/O30/020EA1O304_295_32.jpg</div>
<div class="t b" style="left:1333px;top:553px;color:#454545">Dateiendung</div>
<div class="t" style="left:1539px;top:553px">jpg</div>
<div class="t b" style="left:1333px;top:588px;color:#454545">Dateityp</div>
<div class="t" style="left:1539px;top:588px">Bild</div>
<div class="t b" style="left:1333px;top:623px;color:#454545">Dateigröße</div>
<div class="t" style="left:1539px;top:623px">10 KB</div>
<div class="t b" style="left:1333px;top:658px;color:#454545">Erstellungsdatum</div>
<div class="t" style="left:1539px;top:658px">28.08.2024, 18:19:58</div>
<div class="t b" style="left:1333px;top:693px;color:#454545">Änderungsdartum</div>
<div class="t" style="left:1539px;top:693px">28.08.2024, 18:19:58</div>
<div class="t b" style="left:1333px;top:728px;color:#454545">Freigabestatus</div>
<div class="abs" style="left:1539px;top:721px;width:345px;height:27px;border:1px solid #333;border-radius:1px"></div>
<div class="t" style="left:1548px;top:728px">Nichts ausgewählt</div>
<svg style="left:1863.5px;top:731.5px" width="11" height="7"><path d="M0.7 0.7 L5.3 5.6 L10 0.7" stroke="#333" stroke-width="1.2" fill="none"/></svg>
<div class="t b" style="left:1333px;top:768px;color:#454545">Kommentar</div>
<div class="abs" style="left:1333px;top:784px;width:551px;height:32px;border:1px solid #333;border-radius:1px"></div>
<div class="t" style="left:1342px;top:793px;color:#c8c8c8">keine Angaben</div>
<div class="abs" style="left:1317px;top:827px;width:582px;height:1px;background:#d6d6d6"></div>
<div class="t b" style="left:1333px;top:839px;color:#454545">Bildeigenschaften</div>
<svg style="left:1871px;top:843px" width="12" height="7"><path d="M0.8 0.8 L6 6 L11.2 0.8" stroke="#333" stroke-width="1.5" fill="none"/></svg>
<div class="abs" style="left:1317px;top:864px;width:582px;height:1px;background:#d6d6d6"></div>
<div class="t b" style="left:1333px;top:876px;color:#454545">Verknüpfungen</div>
<svg style="left:1871px;top:880px" width="12" height="7"><path d="M0.8 0.8 L6 6 L11.2 0.8" stroke="#333" stroke-width="1.5" fill="none"/></svg>
<div class="abs gray" style="left:63px;top:886px;width:1836px;height:38px"></div>
<svg style="left:74px;top:897px" width="16" height="17" viewBox="0 0 16 17"><path d="M8 0.5 L15.5 4 V12.8 L8 16.5 L0.5 12.8 V4Z" fill="#333"/><path d="M1 4.3 L8 7.6 L15 4.3 M8 7.6 V16" stroke="#e8e8e8" stroke-width="1.1" fill="none"/></svg>
<svg style="left:102.5px;top:899px" width="8" height="13"><path d="M1 0.8 L6.5 6.5 L1 12.2" stroke="#333" stroke-width="1.6" fill="none"/></svg>
<svg style="left:121px;top:902px" width="16" height="6"><circle cx="2" cy="3" r="1.7" fill="#333"/><circle cx="7.5" cy="3" r="1.7" fill="#333"/><circle cx="13" cy="3" r="1.7" fill="#333"/></svg>
<svg style="left:148.5px;top:899px" width="8" height="13"><path d="M1 0.8 L6.5 6.5 L1 12.2" stroke="#333" stroke-width="1.6" fill="none"/></svg>
<div class="t" style="left:169px;top:899px">Assets</div>
<svg style="left:218px;top:899px" width="8" height="13"><path d="M1 0.8 L6.5 6.5 L1 12.2" stroke="#333" stroke-width="1.6" fill="none"/></svg>
<div class="t" style="left:239px;top:899px">Product-Asset-Data</div>
<svg style="left:357px;top:899px" width="8" height="13"><path d="M1 0.8 L6.5 6.5 L1 12.2" stroke="#333" stroke-width="1.6" fill="none"/></svg>
<div class="t" style="left:377px;top:899px">020</div>
<svg style="left:411.5px;top:899px" width="8" height="13"><path d="M1 0.8 L6.5 6.5 L1 12.2" stroke="#333" stroke-width="1.6" fill="none"/></svg>
<div class="t" style="left:431px;top:899px">EA1</div>
<svg style="left:468px;top:899px" width="8" height="13"><path d="M1 0.8 L6.5 6.5 L1 12.2" stroke="#333" stroke-width="1.6" fill="none"/></svg>
<div class="t blue" style="left:488px;top:899px">O30</div>
</body></html>
